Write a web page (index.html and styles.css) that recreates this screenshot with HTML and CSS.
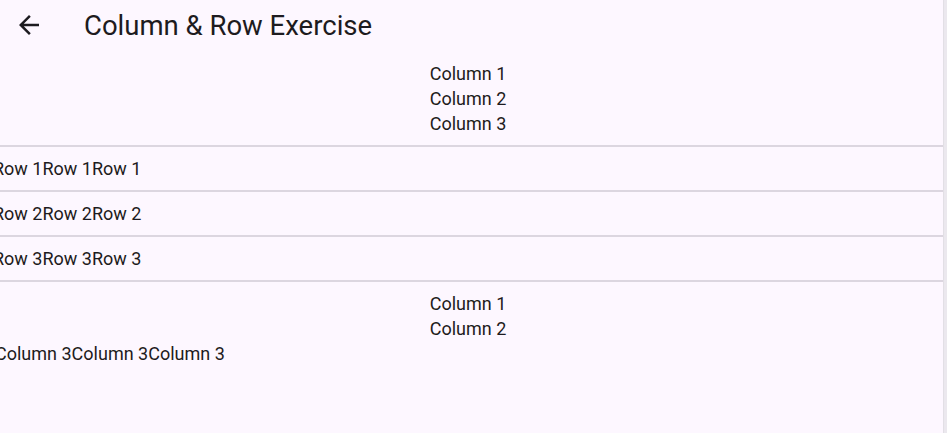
FILE: index.html
```html
<!DOCTYPE html>
<html>
<head>
<meta charset="utf-8">
<link rel="stylesheet" href="styles.css">
</head>
<body>
<div class="frame">
  <div class="app">
    <header class="appbar">
      <span class="back">
        <svg width="30" height="30" viewBox="0 0 24 24"><path d="M20 11H7.83l5.59-5.59L12 4l-8 8 8 8 1.41-1.41L7.83 13H20v-2z" fill="#1d1b20"/></svg>
      </span>
      <h1 class="title">Column &amp; Row Exercise</h1>
    </header>
    <main class="content">
      <section class="col-block first">
        <div class="line">Column 1</div>
        <div class="line">Column 2</div>
        <div class="line">Column 3</div>
      </section>
      <div class="row"><span>Row 1</span><span>Row 1</span><span>Row 1</span></div>
      <div class="row"><span>Row 2</span><span>Row 2</span><span>Row 2</span></div>
      <div class="row"><span>Row 3</span><span>Row 3</span><span>Row 3</span></div>
      <section class="col-block last">
        <div class="line">Column 1</div>
        <div class="line">Column 2</div>
        <div class="inline-row"><span>Column 3</span><span>Column 3</span><span>Column 3</span></div>
      </section>
    </main>
  </div>
  <div class="edge"></div>
</div>
</body>
</html>
```

FILE: styles.css
```css
html, body {
  margin: 0;
  padding: 0;
  height: 100%;
  overflow: hidden;
}
body {
  background: #fdf7ff;
  font-family: Roboto, "Liberation Sans", sans-serif;
  color: #1d1b20;
}
.frame {
  display: flex;
  height: 433px;
}
.app {
  width: 943px;
  overflow: hidden;
  background: #fdf7ff;
}
.edge {
  width: 4px;
  background: #ebe8ee;
  border-left: 1px solid #e2dfe5;
  box-sizing: border-box;
}
.appbar {
  height: 50px;
  display: flex;
  align-items: center;
}
.back {
  width: 30px;
  height: 30px;
  margin-left: 14px;
  display: flex;
}
.title {
  margin: 2px 0 0 40px;
  font-size: 27.5px;
  font-weight: 400;
  line-height: 34px;
}
.content {
  margin-left: -7px;
  width: 950px;
}
.col-block {
  display: flex;
  flex-direction: column;
  align-items: center;
  font-size: 18px;
}
.col-block.first {
  padding-top: 11px;
  padding-bottom: 9px;
  border-bottom: 2px solid #dcd6e0;
}
.col-block.last {
  padding-top: 9px;
}
.line {
  line-height: 25px;
}
.inline-row {
  align-self: flex-start;
  display: flex;
  line-height: 25px;
  margin-left: 2px;
}
.row {
  display: flex;
  font-size: 18px;
  line-height: 25px;
  padding: 9px 0 9px;
  border-bottom: 2px solid #dcd6e0;
}
```
